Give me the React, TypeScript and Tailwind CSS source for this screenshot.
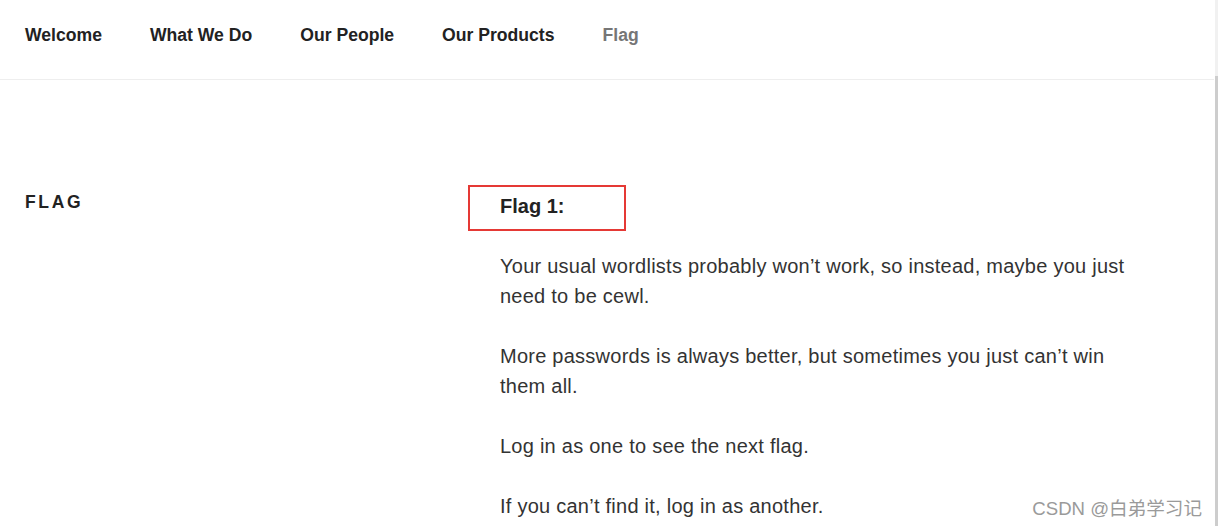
const navItems = ["Welcome", "What We Do", "Our People", "Our Products"];

const paragraphs = [
  "Your usual wordlists probably won’t work, so instead, maybe you just need to be cewl.",
  "More passwords is always better, but sometimes you just can’t win them all.",
  "Log in as one to see the next flag.",
  "If you can’t find it, log in as another.",
];

export default function App() {
  return (
    <div className="relative flex h-[526px] w-full overflow-hidden bg-white font-['Liberation_Sans',Arial,sans-serif]">
      <div className="flex-1">
        {/* top navigation */}
        <header className="h-[80px] border-b border-[#eeeeee]">
          <nav className="flex gap-[48px] pl-[25px] pt-[24px] text-[17.6px] font-bold leading-[23px] text-[#222222]">
            {navItems.map((item) => (
              <a key={item} className="whitespace-nowrap">
                {item}
              </a>
            ))}
            <a className="text-[#767676]">Flag</a>
          </nav>
        </header>

        {/* page body */}
        <main className="flex pl-[25px]">
          <div className="w-[475px] pt-[107px]">
            <h1 className="text-[17.5px] font-extrabold uppercase leading-[30px] tracking-[0.15em] text-[#222222]">
              Flag
            </h1>
          </div>
          <div className="w-[640px] pt-[111px] text-[20px] leading-[30px] tracking-[0.25px] text-[#333333]">
            <div className="relative mb-[30px]">
              <strong className="font-bold tracking-normal text-[#222222]">Flag 1:</strong>
              <div className="absolute -left-[32px] -top-[6px] h-[46px] w-[158px] border-2 border-[#e53935]" />
            </div>
            {paragraphs.map((p, idx) => (
              <p key={idx} className="mb-[30px]">
                {p}
              </p>
            ))}
          </div>
        </main>
      </div>

      {/* scrollbar */}
      <div className="ml-[1px] flex w-[3px] flex-col">
        <div className="h-[76px] bg-[#f1f1f1]" />
        <div className="flex-1 bg-[#cdcdcd]" />
      </div>

      {/* watermark */}
      <div className="absolute bottom-[6px] right-[16px] font-['Liberation_Sans','Noto_Sans_CJK_SC',sans-serif] text-[18.6px] leading-[22px] text-[#9a9a9a]">
        CSDN @白弟学习记
      </div>
    </div>
  );
}
